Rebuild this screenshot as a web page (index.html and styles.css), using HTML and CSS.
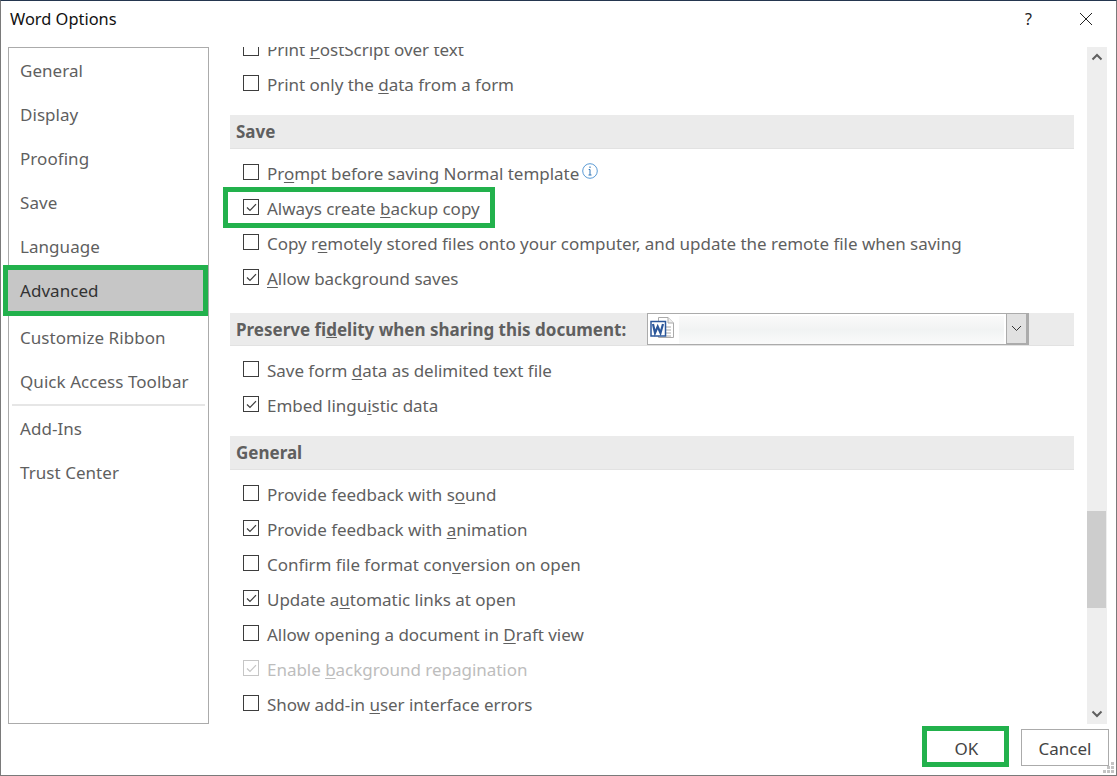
FILE: index.html
```html
<!DOCTYPE html>
<html lang="en">
<head>
<meta charset="utf-8">
<title>Word Options</title>
<link rel="stylesheet" href="styles.css">
</head>
<body>
<div class="dialog">
  <header class="titlebar">
    <span class="title">Word Options</span>
    <span class="help">?</span>
    <svg class="close" width="14" height="14" viewBox="0 0 14 14"><path d="M1 1L13 13M13 1L1 13" stroke="#222" stroke-width="1" fill="none"/></svg>
  </header>
  <div class="main">
    <nav class="sidebar">
      <div class="nav-item">General</div>
      <div class="nav-item">Display</div>
      <div class="nav-item">Proofing</div>
      <div class="nav-item">Save</div>
      <div class="nav-item">Language</div>
      <div class="nav-item selected">Advanced</div>
      <div class="nav-item">Customize Ribbon</div>
      <div class="nav-item">Quick Access Toolbar</div>
      <div class="nav-sep"></div>
      <div class="nav-item">Add-Ins</div>
      <div class="nav-item">Trust Center</div>
    </nav>
    <section class="pane">
      <div class="scroller">
        <div class="row"><span class="box"></span><span>Print <u>P</u>ostScript over text</span></div>
        <div class="row"><span class="box"></span><span>Print only the <u>d</u>ata from a form</span></div>
        <h2 class="band first">Save</h2>
        <div class="row"><span class="box"></span><span>Pr<u>o</u>mpt before saving Normal template</span>
          <svg class="info" width="16" height="16" viewBox="0 0 16 16"><circle cx="8" cy="8" r="7.300" fill="none" stroke="#5b9bd5"/><path d="M8 6.500v5.500M6.500 12h3M6.700 6.500h1.300" stroke="#2e75b6" fill="none"/><rect x="7.400" y="3.500" width="1.200" height="1.400" fill="#2e75b6"/></svg>
        </div>
        <div class="row highlighted"><span class="box"><svg width="13" height="13" viewBox="0 0 13 13"><path d="M2 6.500L5 9.500L11 3.200" fill="none" stroke="#3d3d3d" stroke-width="1.200"/></svg></span><span>Always create <u>b</u>ackup copy</span></div>
        <div class="row"><span class="box"></span><span>Copy r<u>e</u>motely stored files onto your computer, and update the remote file when saving</span></div>
        <div class="row"><span class="box"><svg width="13" height="13" viewBox="0 0 13 13"><path d="M2 6.500L5 9.500L11 3.200" fill="none" stroke="#3d3d3d" stroke-width="1.200"/></svg></span><span><u>A</u>llow background saves</span></div>
        <div class="band fidelity">
          <h2 class="band-label">Preserve fi<u>d</u>elity when sharing this document:</h2>
          <div class="combo">
            <svg class="docicon" width="26" height="26" viewBox="0 0 26 26">
              <path d="M8.500 1.500H18L23.500 7V21.500H8.500Z" fill="#fff" stroke="#aaa"/>
              <path d="M18 1.500V7H23.500" fill="#eee" stroke="#aaa"/>
              <path d="M16 11H21M16 14H21M16 17H21M16 20H21" stroke="#aaa"/>
              <rect x="1" y="5.500" width="14.500" height="14.500" fill="#fff" stroke="#2b579a" stroke-width="1.500"/>
              <path d="M3 8L5 17L7.700 10.500L10.500 17L13 8" fill="none" stroke="#2b579a" stroke-width="2.200"/>
            </svg>
            <div class="blurred"></div>
            <div class="combo-arrow"><svg width="11" height="7" viewBox="0 0 11 7"><path d="M1 1L5.500 5.500L10 1" fill="none" stroke="#333"/></svg></div>
          </div>
        </div>
        <div class="row"><span class="box"></span><span>Save form <u>d</u>ata as delimited text file</span></div>
        <div class="row"><span class="box"><svg width="13" height="13" viewBox="0 0 13 13"><path d="M2 6.500L5 9.500L11 3.200" fill="none" stroke="#3d3d3d" stroke-width="1.200"/></svg></span><span>Embed lingu<u>i</u>stic data</span></div>
        <h2 class="band general">General</h2>
        <div class="row"><span class="box"></span><span>Provide feedback with s<u>o</u>und</span></div>
        <div class="row"><span class="box"><svg width="13" height="13" viewBox="0 0 13 13"><path d="M2 6.500L5 9.500L11 3.200" fill="none" stroke="#3d3d3d" stroke-width="1.200"/></svg></span><span>Provide feedback with <u>a</u>nimation</span></div>
        <div class="row"><span class="box"></span><span>Confirm file format con<u>v</u>ersion on open</span></div>
        <div class="row"><span class="box"><svg width="13" height="13" viewBox="0 0 13 13"><path d="M2 6.500L5 9.500L11 3.200" fill="none" stroke="#3d3d3d" stroke-width="1.200"/></svg></span><span>Update a<u>u</u>tomatic links at open</span></div>
        <div class="row"><span class="box"></span><span>Allow opening a document in <u>D</u>raft view</span></div>
        <div class="row disabled"><span class="box"><svg width="13" height="13" viewBox="0 0 13 13"><path d="M2 6.500L5 9.500L11 3.200" fill="none" stroke="#c6c6c6" stroke-width="1.200"/></svg></span><span>Enable <u>b</u>ackground repagination</span></div>
        <div class="row"><span class="box"></span><span>Show add-in <u>u</u>ser interface errors</span></div>
      </div>
    </section>
    <div class="scrollbar">
      <svg class="sb-arrow" width="12" height="8" viewBox="0 0 12 8"><path d="M1.500 6.500L6 2L10.500 6.500" fill="none" stroke="#5f5f5f" stroke-width="2"/></svg>
      <div class="sb-track"><div class="sb-thumb"></div></div>
      <svg class="sb-arrow" width="12" height="8" viewBox="0 0 12 8"><path d="M1.500 1.500L6 6L10.500 1.500" fill="none" stroke="#5f5f5f" stroke-width="2"/></svg>
    </div>
  </div>
  <footer class="footer">
    <button class="btn ok">OK</button>
    <button class="btn">Cancel</button>
    <svg class="grip" width="12" height="12" viewBox="0 0 12 12"><path d="M8 0h3v3H8zM4 4h3v3H4zM8 4h3v3H8zM0 8h3v3H0zM4 8h3v3H4zM8 8h3v3H8z" fill="#c4c4c4"/></svg>
  </footer>
</div>
</body>
</html>
```
FILE: styles.css
```css
*, *::after { box-sizing: border-box; }
html, body { margin: 0; padding: 0; }
body {
  width: 1117px;
  height: 776px;
  overflow: hidden;
  background: #fff;
  font-family: "Noto Sans", "Open Sans", sans-serif;
  font-size: 17px;
  color: #5f5f5f;
}
.dialog {
  width: 1117px;
  height: 776px;
  display: flex;
  flex-direction: column;
  border-top: 1px solid #24364f;
  border-left: 1px solid #7a7a7a;
  border-right: 1px solid #7a7a7a;
  border-bottom: 1px solid #7a7a7a;
  position: relative;
}
.titlebar {
  height: 46px;
  flex: none;
  display: flex;
  align-items: flex-start;
  padding: 8px 0 0 9px;
  color: #111;
}
.title { font-size: 16.400px; line-height: 20px; flex: 1; }
.help { font-size: 16px; line-height: 20px; margin-right: 47px; color: #222; }
.close { margin: 3px 23px 0 0; }
.main {
  flex: none;
  height: 677px;
  display: flex;
  padding-left: 7px;
}
.sidebar {
  flex: none;
  width: 201px;
  height: 677px;
  border: 1px solid #ababab;
  padding-top: 1px;
  position: relative;
}
.nav-item {
  height: 44px;
  line-height: 44px;
  padding-left: 11px;
  white-space: nowrap;
  letter-spacing: 0.05px;
}
.nav-item.selected {
  height: 41px;
  line-height: 41px;
  margin: 1px 0 5px -1px;
  padding-left: 12px;
  width: 195px;
  color: #333;
  background: #c6c6c6;
  outline: 5px solid #22b14c;
  position: relative;
}
.nav-sep {
  height: 2px;
  background: #e6e6e6;
  margin: 0 3px 1px 3px;
}
.pane {
  flex: none;
  width: 858px;
  margin-left: 21px;
  height: 677px;
  clip-path: inset(0 -20px 0 -20px);
}
.scroller { margin-top: -16px; }
.row {
  height: 35px;
  display: flex;
  align-items: center;
  padding: 1px 0 0 13px;
  gap: 8px;
  white-space: nowrap;
  letter-spacing: -0.03px;
  position: relative;
}
.row u { text-underline-offset: 2px; text-decoration-thickness: 1px; }
.box {
  width: 16px;
  height: 16px;
  margin-top: -2px;
  flex: none;
  border: 1px solid #3d3d3d;
  background: #fff;
  display: flex;
  align-items: center;
  justify-content: center;
}
.box svg { display: block; }
.info { position: absolute; left: 352px; top: 8px; }
.highlighted::after {
  content: "";
  position: absolute;
  left: -7px;
  top: -3px;
  width: 272px;
  height: 41px;
  border: 5px solid #22b14c;
}
.disabled { color: #bdbdbd; }
.disabled .box { border-color: #c6c6c6; }
.band {
  margin: 0 14px 0 0;
  background: #ebebeb;
  border-bottom: 1px solid #e2e2e2;
  padding-left: 6px;
  font-size: 17px;
  font-weight: 700;
  color: #5f5f5f;
}
.band.first { height: 34px; line-height: 34px; margin-top: 14px; margin-bottom: 6px; }
.band.general { height: 34px; line-height: 34px; margin-top: 14px; margin-bottom: 6px; }
.band.fidelity {
  height: 33px;
  margin-top: 18px;
  margin-bottom: 6px;
  display: flex;
  align-items: flex-start;
}
.band-label { margin: 0; font: inherit; line-height: 33px; width: 411px; flex: none; white-space: nowrap; }
.combo {
  width: 382px;
  height: 32px;
  flex: none;
  background: #fff;
  border: 1px solid #ababab;
  display: flex;
  align-items: center;
  position: relative;
}
.docicon { margin-left: 2px; flex: none; }
.blurred {
  flex: 1;
  height: 28px;
  margin: 2px 2px 0 3px;
  background: linear-gradient(180deg, #fafafa, #f1f3f3 50%, #fafafa);
}
.combo-arrow {
  width: 22px;
  height: 31px;
  flex: none;
  background: #e1e1e1;
  border: 1px solid #ababab;
  border-width: 0 2px 2px 1px;
  display: flex;
  align-items: center;
  justify-content: center;
}
.scrollbar {
  flex: none;
  width: 20px;
  height: 677px;
  margin-left: -1px;
  background: #eeeeee;
  display: flex;
  flex-direction: column;
  align-items: center;
}
.sb-arrow { flex: none; margin: 6px 0; }
.sb-track { flex: 1; width: 100%; padding: 444px 1px 0 0; }
.sb-thumb { height: 97px; background: #cdcdcd; }
.footer {
  flex: none;
  height: 51px;
  display: flex;
  justify-content: flex-end;
  align-items: flex-start;
  padding: 5px 7px 0 0;
  gap: 12px;
  position: relative;
}
.btn {
  width: 88px;
  height: 37px;
  padding: 2px 0 0;
  background: #fff;
  border: 1px solid #ababab;
  font: inherit;
  color: #444;
}
.btn.ok {
  border: 5px solid #22b14c;
  width: 87px;
  height: 41px;
  margin-top: -3px;
  padding: 3px 0 0 2px;
}
.grip { position: absolute; right: 1px; bottom: 1px; }
```
